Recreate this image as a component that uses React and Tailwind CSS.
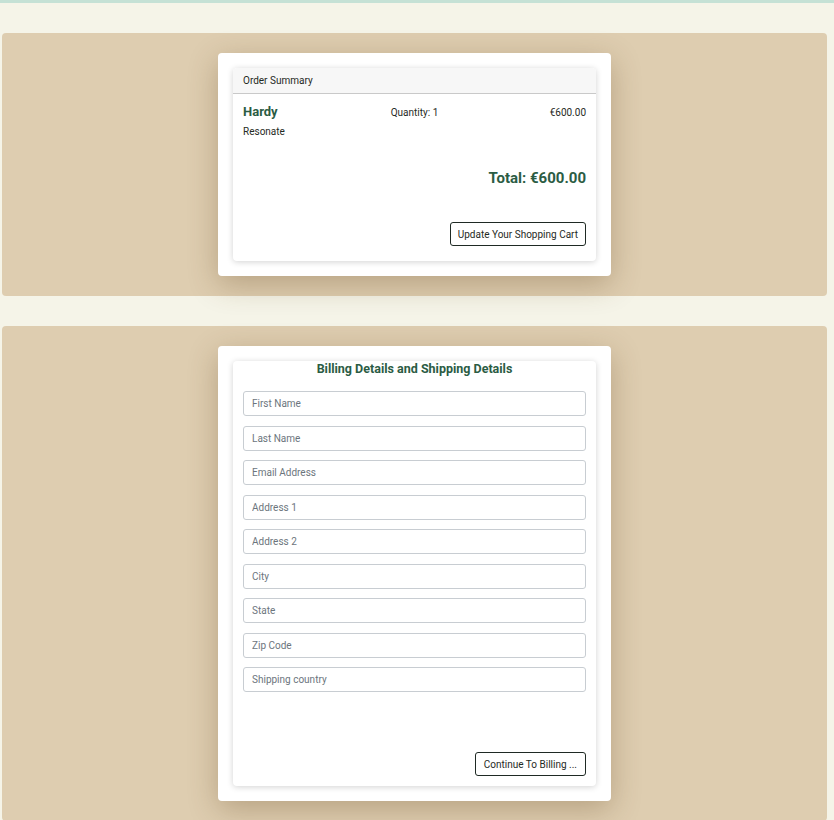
import React from 'react';

const fields = [
  'First Name',
  'Last Name',
  'Email Address',
  'Address 1',
  'Address 2',
  'City',
  'State',
  'Zip Code',
  'Shipping country',
];

export default function App() {
  return (
    <div className="min-h-[820px] bg-[#f5f4e8] font-['Roboto',sans-serif] text-[#1f2a24]">
      <div className="h-[3px] bg-[#c5e1d5]" />

      {/* Order summary */}
      <div className="ml-[2px] mt-[30px] w-[825px] rounded-[4px] bg-[#decdb0] py-[20px]">
        <div className="mx-auto w-[393px] rounded-[4px] bg-white p-[15px] shadow-[0_8px_30px_rgba(90,60,20,0.3)]">
          <div className="overflow-hidden rounded-[4px] bg-white shadow-[0_1px_6px_rgba(0,0,0,0.18)]">
            <div className="flex h-[26px] items-center border-b border-[#c9c9c9] bg-[#f7f7f7] px-[10px] text-[10px]">
              Order Summary
            </div>
            <div className="px-[10px] pt-[10px] pb-[15px]">
              <div className="grid grid-cols-3 items-center">
                <div className="text-[13px] leading-[16px] font-bold text-[#2b5c44]">Hardy</div>
                <div className="text-center text-[10px]">Quantity: 1</div>
                <div className="text-right text-[10px]">€600.00</div>
              </div>
              <div className="mt-[5px] text-[10px] leading-[14px]">Resonate</div>
              <div className="mt-[29px] text-right text-[15px] leading-[20px] font-bold text-[#2b5c44]">
                Total: €600.00
              </div>
              <div className="mt-[34px] flex justify-end">
                <button className="h-[24px] rounded-[3px] border border-[#1f2a24] px-[7px] text-[10px]">
                  Update Your Shopping Cart
                </button>
              </div>
            </div>
          </div>
        </div>
      </div>

      {/* Billing form */}
      <div className="ml-[2px] mt-[30px] w-[825px] rounded-[4px] bg-[#decdb0] py-[20px]">
        <div className="mx-auto w-[393px] rounded-[4px] bg-white p-[15px] shadow-[0_8px_30px_rgba(90,60,20,0.3)]">
          <div className="rounded-[4px] bg-white px-[10px] pb-[10px] shadow-[0_1px_6px_rgba(0,0,0,0.18)]">
            <h2 className="text-center text-[12.5px] leading-[16px] font-bold text-[#2b5c44]">
              Billing Details and Shipping Details
            </h2>
            <div className="mt-[14px] flex flex-col gap-[9.5px]">
              {fields.map((f) => (
                <input
                  key={f}
                  placeholder={f}
                  className="h-[25px] w-full rounded-[3px] border border-[#c8cdd2] px-[8px] text-[10px] placeholder:text-[#6c757d] outline-none"
                />
              ))}
            </div>
            <div className="mt-[60px] flex justify-end">
              <button className="h-[24px] rounded-[3px] border border-[#1f2a24] px-[8px] text-[10px]">
                Continue To Billing ...
              </button>
            </div>
          </div>
        </div>
      </div>
    </div>
  );
}
